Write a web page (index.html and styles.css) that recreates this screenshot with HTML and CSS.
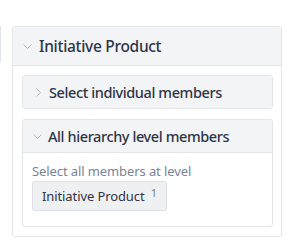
FILE: index.html
```html
<!DOCTYPE html>
<html lang="en">
<head>
  <meta charset="UTF-8">
  <title>Hierarchy</title>
  <link rel="stylesheet" href="styles.css">
</head>
<body>
  <div class="page">
    <div class="side-edge"></div>

    <div class="panel">
      <div class="panel-head">
        <svg class="chev-down" width="9" height="5" viewBox="0 0 9 5"><path d="M0.5 0.5 L4.5 4.5 L8.5 0.5" fill="none" stroke="#b4b9c1" stroke-width="1"/></svg>
        <span class="panel-title">Initiative Product</span>
      </div>

      <div class="panel-body">
        <div class="section">
          <div class="section-head">
            <svg class="chev-right" width="5" height="9" viewBox="0 0 5 9"><path d="M0.5 0.5 L4.5 4.5 L0.5 8.5" fill="none" stroke="#b4b9c1" stroke-width="1"/></svg>
            <span>Select individual members</span>
          </div>
        </div>

        <div class="section">
          <div class="section-head open">
            <svg class="chev-down" width="9" height="5" viewBox="0 0 9 5"><path d="M0.5 0.5 L4.5 4.5 L8.5 0.5" fill="none" stroke="#b4b9c1" stroke-width="1"/></svg>
            <span>All hierarchy level members</span>
          </div>
          <div class="section-body">
            <div class="hint">Select all members at level</div>
            <div class="chip">Initiative Product <sup class="count">1</sup></div>
          </div>
        </div>
      </div>
    </div>
  </div>
</body>
</html>
```

FILE: styles.css
```css
body {
  margin: 0;
  font-family: "Noto Sans", "Open Sans", sans-serif;
  background: #fff;
  color: #2f3447;
}
.page {
  display: flex;
  align-items: flex-start;
  padding-top: 26px;
}
.side-edge {
  width: 1px;
  height: 37px;
  background: #e3e5e8;
  margin-right: 11px;
}
.panel {
  width: 268px;
  border: 1px solid #e3e5e8;
  border-radius: 3px;
}
.panel-head {
  display: flex;
  align-items: center;
  height: 38px;
  background: #f3f4f6;
  border-bottom: 1px solid #e3e5e8;
  border-radius: 3px 3px 0 0;
}
.panel-head .chev-down {
  margin: 0 7px 0 10px;
}
.panel-title {
  font-size: 15.5px;
  font-weight: 500;
  letter-spacing: -0.3px;
  color: #2f3447;
}
.panel-body {
  padding: 9px 8px 9px 9px;
  display: flex;
  flex-direction: column;
  gap: 10px;
}
.section {
  border: 1px solid #e3e5e8;
  border-radius: 3px;
}
.section-head {
  display: flex;
  align-items: center;
  height: 32px;
  background: #f3f4f6;
  font-size: 14.5px;
  font-weight: 500;
  letter-spacing: -0.4px;
  color: #2f3447;
}
.section-head .chev-right {
  margin: 0 8px 0 13px;
}
.section-head .chev-down {
  margin: 0 6px 0 10px;
}
.section-head.open {
  border-bottom: 1px solid #e3e5e8;
}
.section-body {
  padding: 9px 9px 15px 9px;
}
.hint {
  font-size: 13px;
  letter-spacing: -0.1px;
  color: #7b8396;
  line-height: 18px;
}
.chip {
  display: inline-block;
  margin-top: 1px;
  padding: 5px 9px;
  font-size: 13px;
  letter-spacing: -0.1px;
  line-height: 18px;
  color: #2f3447;
  background: #eff0f2;
  border: 1px solid #dcdfe3;
  border-radius: 3px;
}
.count {
  font-size: 11px;
  color: #7b8396;
  margin-left: 3px;
  vertical-align: 4px;
  line-height: 0;
}
```
